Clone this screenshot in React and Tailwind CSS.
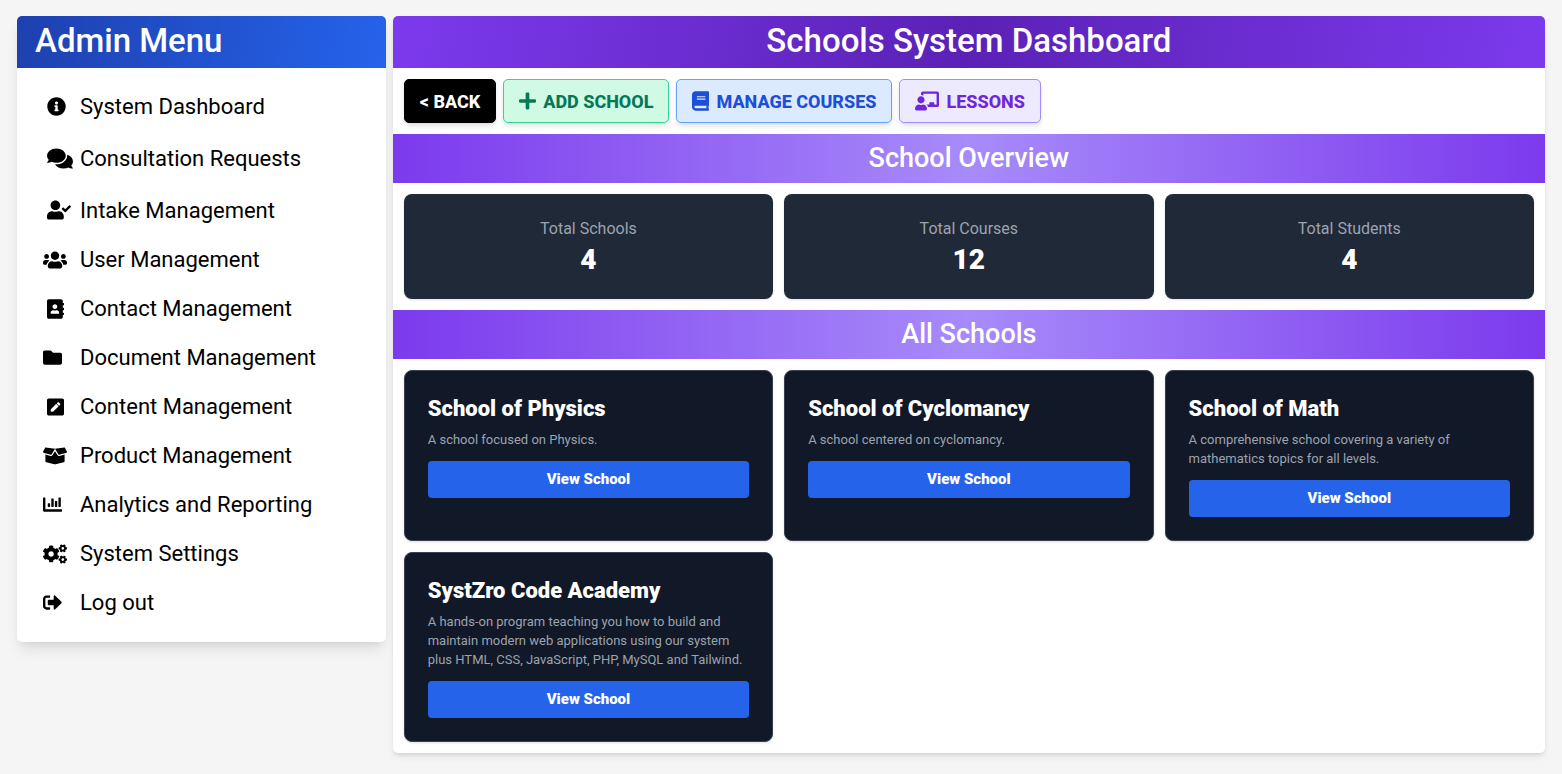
import {
  FaAddressBook,
  FaBook,
  FaBoxOpen,
  FaChalkboardTeacher,
  FaChartBar,
  FaCogs,
  FaComments,
  FaFolder,
  FaInfoCircle,
  FaPenSquare,
  FaPlus,
  FaSignOutAlt,
  FaUserCheck,
  FaUsers,
} from 'react-icons/fa';
import clsx from 'clsx';

// tall rows are the entries at the top of the menu, inset rows have their icon pushed in
const menuItems = [
  { label: 'System Dashboard', icon: FaInfoCircle, size: 'h-[19px] w-[19px]', tall: true, inset: true },
  { label: 'Consultation Requests', icon: FaComments, size: 'h-[23px] w-[26px]', tall: true, inset: true },
  { label: 'Intake Management', icon: FaUserCheck, size: 'h-5 w-6', tall: true, inset: true },
  { label: 'User Management', icon: FaUsers, size: 'h-5 w-6' },
  { label: 'Contact Management', icon: FaAddressBook, size: 'h-5 w-[17px]', inset: true },
  { label: 'Document Management', icon: FaFolder, size: 'h-[19px] w-[19px]' },
  { label: 'Content Management', icon: FaPenSquare, size: 'h-5 w-[17px]', inset: true },
  { label: 'Product Management', icon: FaBoxOpen, size: 'h-5 w-6' },
  { label: 'Analytics and Reporting', icon: FaChartBar, size: 'h-[19px] w-[19px]' },
  { label: 'System Settings', icon: FaCogs, size: 'h-5 w-6' },
  { label: 'Log out', icon: FaSignOutAlt, size: 'h-[19px] w-[19px]' },
];

const stats = [
  { label: 'Total Schools', value: 4 },
  { label: 'Total Courses', value: 12 },
  { label: 'Total Students', value: 4 },
];

const schools = [
  { name: 'School of Physics', description: 'A school focused on Physics.' },
  { name: 'School of Cyclomancy', description: 'A school centered on cyclomancy.' },
  {
    name: 'School of Math',
    description: 'A comprehensive school covering a variety of mathematics topics for all levels.',
  },
  {
    name: 'SystZro Code Academy',
    description:
      'A hands-on program teaching you how to build and maintain modern web applications using our system plus HTML, CSS, JavaScript, PHP, MySQL and Tailwind.',
  },
];

const MenuItem = ({ label, icon: Icon, size, tall, inset }) => (
  <li>
    <a href="#" className={clsx('flex items-center', tall ? 'h-[52px] pt-0.5' : 'h-[49px]')}>
      <span className={clsx('flex w-[37px] shrink-0', inset && 'pl-1')}>
        <Icon className={clsx('shrink-0', size)} />
      </span>
      <span>{label}</span>
    </a>
  </li>
);

const ActionButton = ({ icon: Icon, iconSize, className, children }) => (
  <button
    type="button"
    className={clsx(
      'flex h-11 cursor-pointer items-center gap-[7px] rounded-[5px] border px-[15px] text-[18px] font-extrabold shadow-md',
      className
    )}
  >
    {Icon && <Icon className={iconSize} />}
    {children}
  </button>
);

const SectionTitle = ({ children }) => (
  <h2 className="bg-[linear-gradient(90deg,#7c3aed,#a78bfa,#7c3aed)] pb-px text-center text-[27px] leading-[48px] font-medium text-white">
    {children}
  </h2>
);

const SchoolCard = ({ name, description }) => (
  <article className="rounded-lg border border-[#374151] bg-[#111827] p-[23px] shadow-sm">
    <h3 className="text-[22px] leading-[30px] font-black text-white">{name}</h3>
    <p className="mt-1.5 text-[13px] leading-[19px] text-[#9ca3af]">{description}</p>
    <a
      href="#"
      className="mt-3 block rounded-[4px] bg-[#2563eb] text-center text-[15px] leading-[37px] font-black text-white"
    >
      View School
    </a>
  </article>
);

export default function App() {
  return (
    <div className="grid min-h-screen grid-cols-[8fr_25fr] items-start gap-[7px] bg-[#f5f5f5] px-[17px] py-4 font-['Roboto',sans-serif]">
      <aside className="overflow-hidden rounded-[5px] bg-white shadow-lg">
        <h2 className="bg-[linear-gradient(100deg,#1e40af,#2563eb)] pb-0.5 pl-[18px] text-[33px] leading-[50px] font-medium text-white">
          Admin Menu
        </h2>
        <nav className="pt-[11px] pb-[15px] pl-[26px] text-[22px] text-black">
          <ul>
            {menuItems.map((item) => (
              <MenuItem key={item.label} {...item} />
            ))}
          </ul>
        </nav>
      </aside>

      <main className="overflow-hidden rounded-[5px] bg-white shadow-md">
        <h1 className="bg-[linear-gradient(100deg,#7c3aed,#5b21b6,#7c3aed)] pb-0.5 text-center text-[33px] leading-[50px] font-medium text-white">
          Schools System Dashboard
        </h1>

        <div className="flex flex-wrap gap-[7px] p-[11px]">
          <ActionButton className="border-black bg-black text-white">&lt; BACK</ActionButton>
          <ActionButton
            icon={FaPlus}
            iconSize="h-5 w-[17px]"
            className="border-[#34d399] bg-[#d1fae5] text-[#047857]"
          >
            ADD SCHOOL
          </ActionButton>
          <ActionButton
            icon={FaBook}
            iconSize="h-5 w-[17px]"
            className="border-[#60a5fa] bg-[#dbeafe] text-[#1d4ed8]"
          >
            MANAGE COURSES
          </ActionButton>
          <ActionButton
            icon={FaChalkboardTeacher}
            iconSize="h-5 w-6"
            className="border-[#a78bfa] bg-[#ede9fe] text-[#6d28d9]"
          >
            LESSONS
          </ActionButton>
        </div>

        <SectionTitle>School Overview</SectionTitle>
        <div className="grid grid-cols-3 gap-[11px] p-[11px]">
          {stats.map((stat) => (
            <div
              key={stat.label}
              className="rounded-lg bg-[#1f2937] pt-[23px] pb-[21px] text-center shadow-sm"
            >
              <p className="text-base leading-6 text-[#9ca3af]">{stat.label}</p>
              <p className="text-[28px] leading-[37px] font-black text-white">{stat.value}</p>
            </div>
          ))}
        </div>

        <SectionTitle>All Schools</SectionTitle>
        <div className="grid grid-cols-3 gap-[11px] p-[11px]">
          {schools.map((school) => (
            <SchoolCard key={school.name} {...school} />
          ))}
        </div>
      </main>
    </div>
  );
}
